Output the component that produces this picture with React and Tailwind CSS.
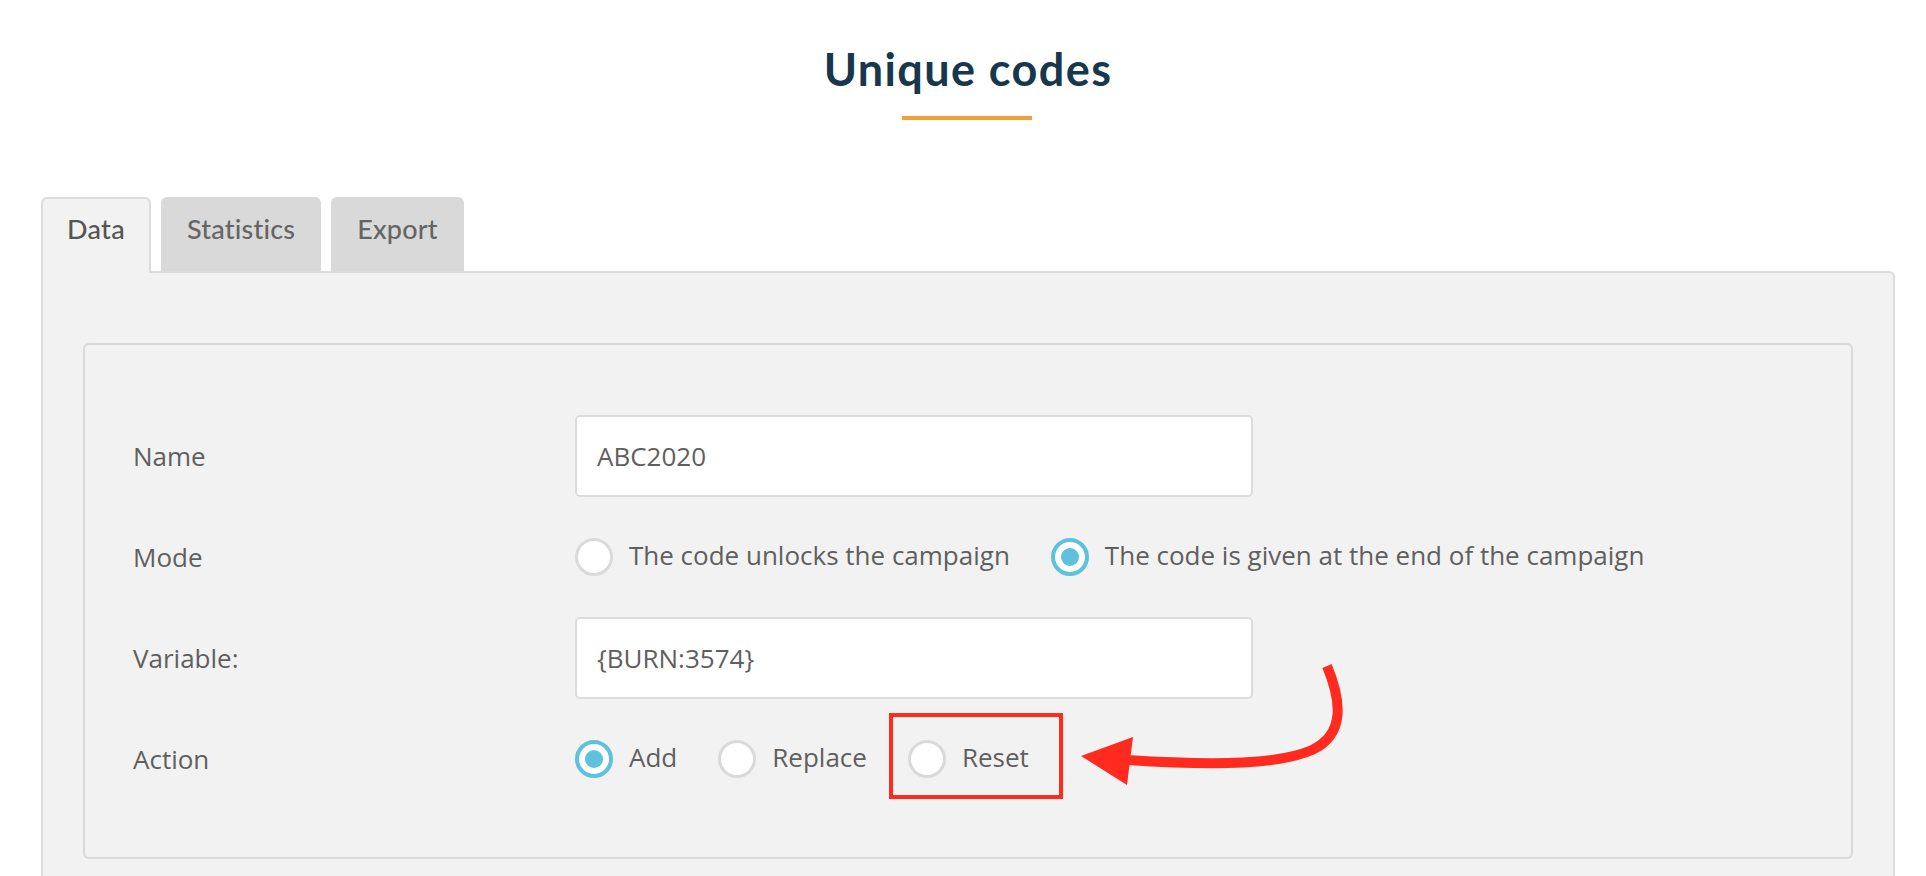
import React from "react";

const TEXT = "font-['Open_Sans',sans-serif] text-[26px] leading-none text-[#5f5f5f]";

function Radio({ checked }) {
  if (checked) {
    return (
      <span className="w-[38px] h-[38px] shrink-0 rounded-full border-[4px] border-[#5fc1dc] bg-white flex items-center justify-center">
        <span className="w-[18px] h-[18px] rounded-full bg-[#5fc1dc]" />
      </span>
    );
  }
  return <span className="w-[38px] h-[38px] shrink-0 rounded-full border-[3px] border-[#dadada] bg-white" />;
}

function RadioItem({ label, checked, children }) {
  return (
    <label className="relative flex items-center">
      <Radio checked={checked} />
      <span className={`${TEXT} ml-[16px] -mt-[4px]`}>{label}</span>
      {children}
    </label>
  );
}

function Row({ label, children }) {
  return (
    <div className="flex items-center">
      <div className={`${TEXT} w-[442px] shrink-0`}>{label}</div>
      {children}
    </div>
  );
}

function TextBox({ value }) {
  return (
    <div className={`${TEXT} w-[678px] h-[82px] border-2 border-[#dcdcdc] rounded-[5px] bg-white px-[20px] flex items-center`}>
      {value}
    </div>
  );
}

export default function App() {
  const tabs = [
    { id: "data", label: "Data", active: true },
    { id: "stats", label: "Statistics" },
    { id: "export", label: "Export" },
  ];

  return (
    <div className="relative w-full h-[876px] overflow-hidden bg-white">
      {/* Heading */}
      <div className="flex flex-col items-center pt-[47px]">
        <h1 className="pl-[10px] font-['Lato',sans-serif] font-bold text-[45px] leading-[45px] tracking-[1.4px] text-[#17384c]">
          Unique codes
        </h1>
        <div className="mt-[24px] w-[130px] h-[4px] bg-[#f59d38] ml-[8px]" />
      </div>

      {/* Tabs */}
      <div className="ml-[41px] mt-[77px] flex items-start gap-[10px] relative z-10">
        {tabs.map((tab) =>
          tab.active ? (
            <div
              key={tab.id}
              className="h-[76px] -mb-[2px] px-[24px] pt-[16px] bg-[#f2f2f2] border-2 border-b-0 border-[#dcdcdc] rounded-t-[6px] font-['Lato',sans-serif] font-medium text-[27px] tracking-[0.3px] leading-none text-[#555555]"
            >
              {tab.label}
            </div>
          ) : (
            <div
              key={tab.id}
              className="h-[74px] px-[26px] pt-[18px] bg-[#d9d9d9] rounded-t-[6px] font-['Lato',sans-serif] font-medium text-[27px] tracking-[0.2px] leading-none text-[#656565]"
            >
              {tab.label}
            </div>
          )
        )}
      </div>

      {/* Panel */}
      <div className="ml-[41px] w-[1854px] border-2 border-[#dcdcdc] rounded-tr-[6px] bg-[#f2f2f2] px-[40px] pt-[70px] pb-[40px]">
        <div className="border-2 border-[#d9d9d9] rounded-[6px] pl-[48px] pt-[70px] pb-[79px] flex flex-col gap-[41px]">
          <Row label="Name">
            <TextBox value="ABC2020" />
          </Row>
          <Row label="Mode">
            <div className="flex items-center gap-[41px]">
              <RadioItem label="The code unlocks the campaign" />
              <RadioItem label="The code is given at the end of the campaign" checked />
            </div>
          </Row>
          <Row label="Variable:">
            <TextBox value="{BURN:3574}" />
          </Row>
          <Row label="Action">
            <div className="flex items-center gap-[41px]">
              <RadioItem label="Add" checked />
              <RadioItem label="Replace" />
              <RadioItem label="Reset">
                {/* annotation box */}
                <span className="absolute -left-[19px] -top-[27px] w-[174px] h-[86px] border-[4px] border-[#ff2b1f] pointer-events-none" />
              </RadioItem>
            </div>
          </Row>
        </div>
      </div>

      {/* annotation arrow */}
      <svg
        className="absolute left-0 top-0 pointer-events-none"
        width="1926"
        height="876"
        viewBox="0 0 1926 876"
      >
        <path
          d="M1327 666 C1341 700 1346 734 1312 750 C1280 764 1220 766 1128 760"
          fill="none"
          stroke="#ff2b1f"
          strokeWidth="10"
        />
        <polygon points="1081,756 1133,737 1127,785" fill="#ff2b1f" />
      </svg>
    </div>
  );
}
